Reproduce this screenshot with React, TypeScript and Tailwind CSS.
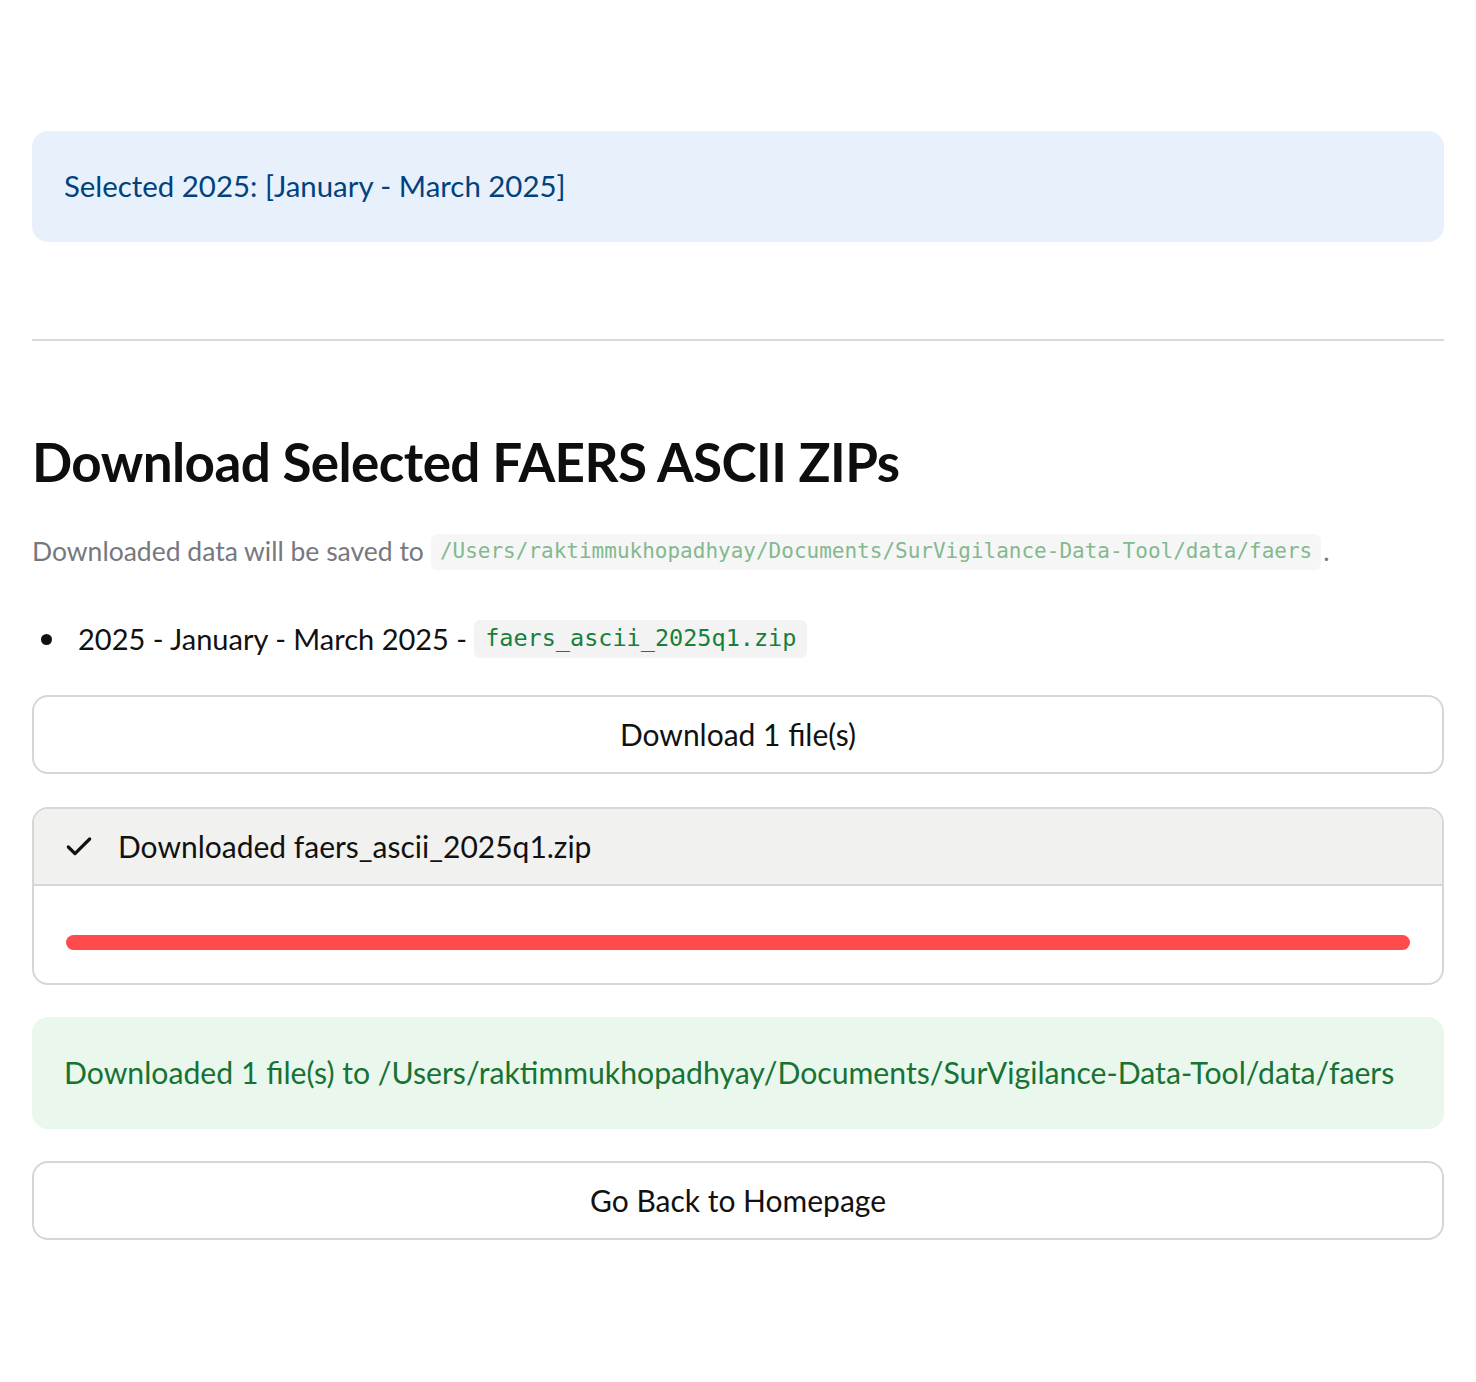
import { Check } from 'lucide-react'

const savePath = '/Users/raktimmukhopadhyay/Documents/SurVigilance-Data-Tool/data/faers'
const mono = { fontFamily: '"DejaVu Sans Mono", "Liberation Mono", monospace' }

function Button({ label, className }: { label: string; className?: string }) {
  return (
    <button
      className={
        'flex h-[79px] w-full items-center justify-center rounded-2xl border-2 border-[#d6d6d8] bg-white text-[30px] text-[#111] ' +
        (className ?? '')
      }
    >
      {label}
    </button>
  )
}

export default function App() {
  return (
    <div
      className="min-h-screen bg-white px-8 pt-[131px] pb-[140px] text-[#111]"
      style={{ fontFamily: 'Lato, "Liberation Sans", sans-serif' }}
    >
      {/* info alert */}
      <div className="flex h-[111px] items-center rounded-2xl bg-[#e8f0fc] px-8 text-[29.4px] text-[#004280]">
        Selected 2025: [January - March 2025]
      </div>

      <hr className="mt-[97px] border-t-2 border-[#d9d9dc]" />

      <h3 className="mt-[89px] flex h-[64px] items-center text-[53px] font-bold tracking-[-0.6px] text-[#0e0e0e]">
        Download Selected FAERS ASCII ZIPs
      </h3>

      <p className="mt-[40px] flex h-[36px] items-center text-[26.5px] text-[#77787d]">
        Downloaded data will be saved to
        <code className="ml-[7px] flex h-[36px] items-center rounded-md bg-[#f6f6f7] px-[9px] text-[21px] text-[#83b98e]" style={mono}>
          {savePath}
        </code>
        <span className="ml-[2px]">.</span>
      </p>

      <ul className="mt-[50px]">
        <li className="flex h-[38px] items-center text-[29px]">
          <span className="ml-[9px] mr-[26px] h-[11px] w-[11px] rounded-full bg-[#111]" />
          2025 - January - March 2025 -
          <code className="ml-[7px] flex h-[38px] items-center rounded-md bg-[#f3f3f4] px-[11px] text-[23.5px] text-[#15803d]" style={mono}>
            faers_ascii_2025q1.zip
          </code>
        </li>
      </ul>

      <Button label="Download 1 file(s)" className="mt-[37px]" />

      {/* status container */}
      <div className="mt-[33px] overflow-hidden rounded-2xl border-2 border-[#d6d6d8]">
        <div className="flex h-[77px] items-center gap-[23px] border-b-2 border-[#d6d6d8] bg-[#f1f1f0] px-[29px]">
          <Check className="h-[32px] w-[32px] text-[#111]" strokeWidth={2.4} />
          <span className="text-[30px]">Downloaded faers_ascii_2025q1.zip</span>
        </div>
        <div className="h-[97px] px-[32px] pt-[49px]">
          <div className="h-[15px] w-full rounded-full bg-[#ff4b4b]" />
        </div>
      </div>

      {/* success alert */}
      <div className="mt-[32px] flex h-[112px] items-center rounded-2xl bg-[#e9f7ed] px-8 text-[30.2px] text-[#177233]">
        Downloaded 1 file(s) to {savePath}
      </div>

      <Button label="Go Back to Homepage" className="mt-[32px]" />
    </div>
  )
}
